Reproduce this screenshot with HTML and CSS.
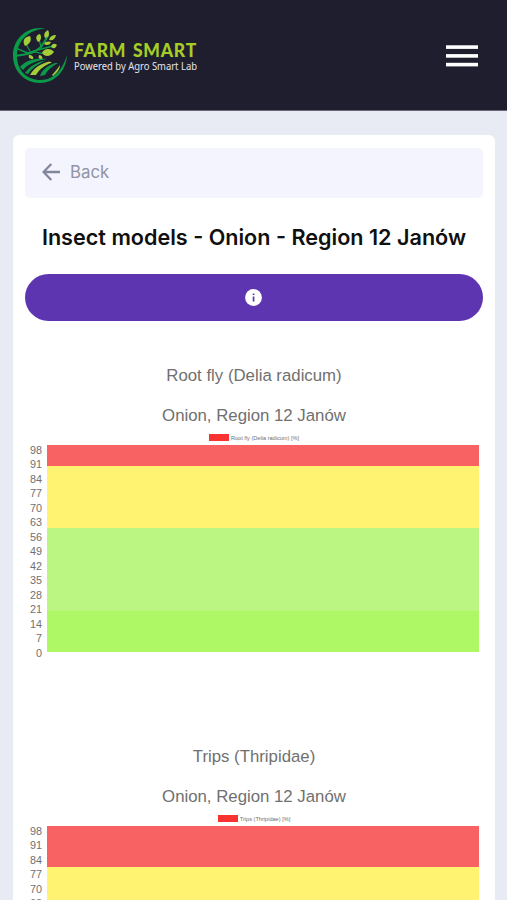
FILE: index.html
```html
<!DOCTYPE html>
<html lang="en">
<head>
<meta charset="utf-8">
<meta name="viewport" content="width=device-width, initial-scale=1">
<title>Farm Smart</title>
<link rel="stylesheet" href="styles.css">
</head>
<body>
<header class="topbar">
  <svg class="brand" width="190" height="62" viewBox="0 0 190 62" role="img" aria-label="Farm Smart">
    <path d="M34 4.500C15 1 1 15 1 31.500c0 16 12 27.500 27 27.500 14 0 26-11 27-28-4 14-13 25-26 25C14 56 5 46 5 31.500 5 17 17 5 34 4.500Z" fill="#0b9b48"/>
    <g fill="none" stroke="#0b9b48" stroke-linecap="round">
      <path d="M3 32C13 30 20 31 29 23L36 12" stroke-width="2"/>
      <path d="M6 25C12 27 15 31 22 27L41 22" stroke-width="1.5"/>
      <path d="M19 29L14 20M21 28C26 28 28 30 33 29M29 23L27 15" stroke-width="1.2"/>
    </g>
    <g fill="#a5cd39">
      <path d="M13 22C10 17 12 13 18 12C20 16 18 20 13 22Z"/>
      <path d="M26 18C23 14 24 11 28 10C30 13 29 17 26 18Z"/>
      <path d="M33 14C31 10 33 8 36 6C38 10 37 13 33 14Z"/>
      <path d="M37 16C38 12 41 11 44 11C43 15 41 17 37 16Z"/>
      <path d="M32 20C33 17 37 17 39 18C38 21 35 22 32 20Z"/>
      <path d="M39 23C40 19 43 19 45 21C43 25 42 25 39 23Z"/>
      <path d="M30 29C32 24 39 24 42 28C38 33 33 33 30 29Z"/>
      <path d="M17 31C20 31 22 33 21 35C18 35 16 34 17 31Z"/>
      <path d="M27 31C30 31 31 34 30 36C27 35 26 34 27 31Z"/>
      <path d="M18 51C22 44 28 40 37 37.500L40 38.500C31 42 27 46 24 51Z"/>
      <path d="M40 51C43 48 46 44 48 41C48 45 45 49 41 52Z"/>
    </g>
    <g fill="#0b9b48">
      <path d="M8 43C14 36 23 34 35 35C24 37 17 39 11 46Z"/>
      <path d="M13 49C18 42 25 38 34 36.500C26 40 20 44 16 50Z"/>
      <path d="M28 52C30 46 35 42 43 39L46 39C39 43 35 47 33 51Z"/>
    </g>
    <text class="brand-name" x="62" y="32.5" textLength="123" lengthAdjust="spacingAndGlyphs">FARM SMART</text>
    <text class="brand-tag" x="62" y="45.5" textLength="123" lengthAdjust="spacingAndGlyphs">Powered by Agro Smart Lab</text>
  </svg>
  <svg class="menu" width="32" height="22" viewBox="0 0 32 22" aria-label="Menu" fill="#fff">
    <rect y="0.3" width="32" height="3.6"/><rect y="9.1" width="32" height="3.6"/><rect y="17.8" width="32" height="3.6"/>
  </svg>
</header>
<main class="card">
  <a class="back">
    <svg width="18" height="18" viewBox="0 0 18 18" fill="none" stroke="#82869b" stroke-width="2.3"><path d="M18 9H1.7M9.3 1L1.5 9l7.8 8"/></svg>
    <span>Back</span>
  </a>
  <h1>Insect models - Onion - Region 12 Janów</h1>
  <button class="info" aria-label="Information">
    <svg width="17" height="17" viewBox="0 0 17 17"><circle cx="8.5" cy="8.5" r="8.4" fill="#fff"/><path d="M7.7 4.4h1.7v1.7H7.7zM7.7 7.6h1.7v5H7.7z" fill="#5e35b1"/></svg>
  </button>
  <section class="chart">
    <h2>Root fly (Delia radicum)</h2>
    <h2>Onion, Region 12 Janów</h2>
    <div class="legend"><i></i><span>Root fly (Delia radicum) [%]</span></div>
    <div class="plot">
      <div class="axis"><span>98</span><span>91</span><span>84</span><span>77</span><span>70</span><span>63</span><span>56</span><span>49</span><span>42</span><span>35</span><span>28</span><span>21</span><span>14</span><span>7</span><span>0</span></div>
      <div class="bands root-fly"><div class="red"></div><div class="yellow"></div><div class="green"></div><div class="lime"></div></div>
    </div>
  </section>
  <section class="chart">
    <h2>Trips (Thripidae)</h2>
    <h2>Onion, Region 12 Janów</h2>
    <div class="legend"><i></i><span>Trips (Thripidae) [%]</span></div>
    <div class="plot">
      <div class="axis"><span>98</span><span>91</span><span>84</span><span>77</span><span>70</span><span>63</span></div>
      <div class="bands trips"><div class="red"></div><div class="yellow"></div><div class="green"></div><div class="lime"></div></div>
    </div>
  </section>
</main>
</body>
</html>
```
FILE: styles.css
```css
* { box-sizing: border-box; }
html { height: 100%; overflow: hidden; }
body {
  margin: 0;
  height: 900px;
  overflow: hidden;
  background: #e8eaf4;
  font-family: Inter, sans-serif;
}
.topbar {
  height: 111px;
  padding: 0 29px 0 12px;
  background: #1f1e2e;
  border-bottom: 1px solid #686777;
  display: flex;
  align-items: center;
  justify-content: space-between;
}
.menu { margin-top: 2px; }
.brand-name { font: 900 19px Lato, sans-serif; letter-spacing: 0.8px; word-spacing: 2px; fill: #a5cd27; }
.brand-tag { font: 10px "Noto Sans", sans-serif; fill: #e4e4ea; }
.card {
  margin: 24px 12px 0 13px;
  padding: 13px 12px 0;
  background: #fff;
  border-radius: 6px;
}
.back {
  height: 50px;
  padding: 0 0 2px 17px;
  display: flex;
  align-items: center;
  gap: 10px;
  background: #f3f4fd;
  border-radius: 5px;
  color: #9093a3;
  font-size: 16.8px;
}
h1 {
  margin: 22px 0 0;
  height: 34px;
  line-height: 34px;
  font-size: 21.6px;
  font-weight: 600;
  text-align: center;
  white-space: nowrap;
  color: #101010;
}
.info {
  width: 100%;
  height: 47px;
  margin-top: 20px;
  padding: 0 1px 0 0;
  border: 0;
  border-radius: 24px;
  background: #5e35b1;
  display: flex;
  align-items: center;
  justify-content: center;
}
.chart {
  height: 381px;
  padding-top: 35px;
  font-family: "Liberation Sans", sans-serif;
  color: #707070;
}
h2 {
  margin: 0;
  height: 40px;
  line-height: 40px;
  font-size: 16.8px;
  font-weight: 400;
  text-align: center;
}
.legend {
  height: 9px;
  margin-top: -3px;
  display: flex;
  align-items: center;
  justify-content: center;
  gap: 2px;
  font-size: 5.6px;
}
.legend i { width: 20px; height: 7px; background: #f93232; }
.plot { display: flex; padding-top: 3px; }
.axis {
  width: 22px;
  padding-right: 5px;
  margin-top: -2px;
  display: flex;
  flex-direction: column;
  font-size: 10.8px;
  text-align: right;
}
.axis span { height: 14.49px; line-height: 14.49px; }
.bands {
  width: 432px;
  height: 207px;
  display: grid;
}
.root-fly { grid-template-rows: 10fr 30fr 40fr 20fr; }
.trips { grid-template-rows: 20fr 30fr 30fr 20fr; }
.red { background: #f86262; }
.yellow { background: #fff371; }
.green { background: #bcf682; }
.lime { background: #adf864; }
```
